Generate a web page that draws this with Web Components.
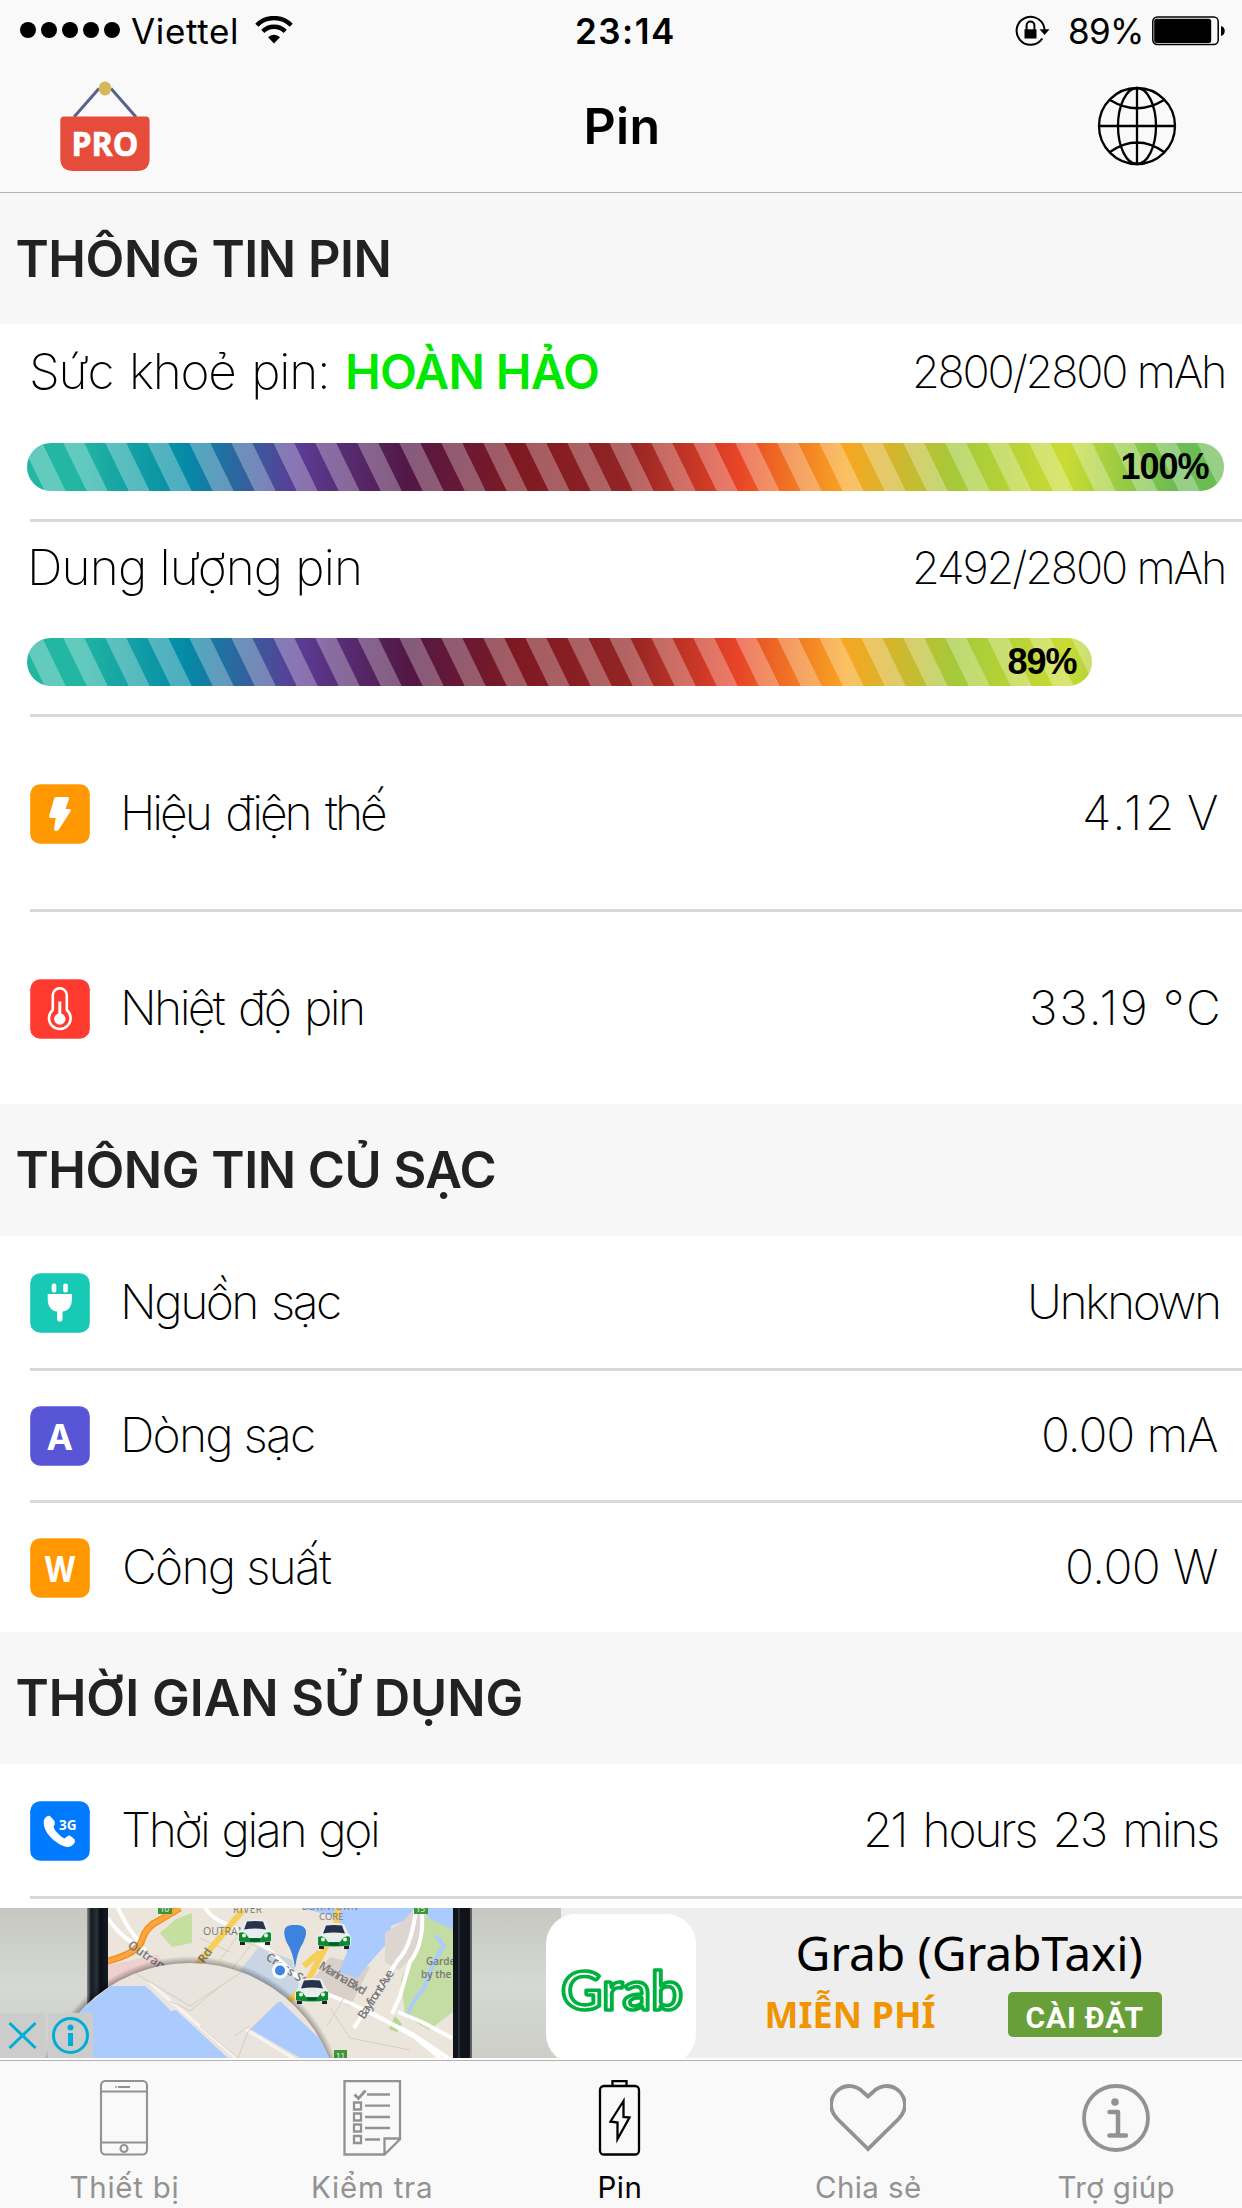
<!DOCTYPE html>
<html lang="vi">
<head>
<meta charset="utf-8">
<title>Pin</title>
<style>
html,body{margin:0;padding:0;background:#fff}
body{width:1242px;height:2208px;overflow:hidden;font-family:Inter,"Liberation Sans",sans-serif;color:#000}
</style>
</head>
<body>
<battery-app></battery-app>
<script>
const make = (name, html, init) => {
  const t = document.createElement('template');
  t.innerHTML = html;
  customElements.define(name, class extends HTMLElement {
    connectedCallback() {
      if (this.shadowRoot) return;
      this.attachShadow({mode: 'open'}).appendChild(t.content.cloneNode(true));
      if (init) init(this, this.shadowRoot);
    }
  });
};

/* Text whose tracking is set so that its ink spans the width given by "w"; "ws" widens the word spaces */
make('fit-text', `<style>:host{display:block;white-space:nowrap;flex:none}span{display:inline-block}</style><span><slot></slot></span>`, (el, root) => {
  const w = parseFloat(el.getAttribute('w')), ws = parseFloat(el.getAttribute('ws') || 0), span = root.querySelector('span');
  el.style.width = w + 'px';
  const text = el.textContent, cs = getComputedStyle(el);
  const ctx = document.createElement('canvas').getContext('2d');
  ctx.font = `${cs.fontWeight} ${cs.fontSize} ${cs.fontFamily}`;
  const m = ctx.measureText(text);
  const ink = m.actualBoundingBoxLeft + m.actualBoundingBoxRight + ws * (text.split(' ').length - 1);
  span.style.wordSpacing = ws + 'px';
  span.style.letterSpacing = (w - ink) / ([...text].length - 1) + 'px';
  span.style.marginLeft = m.actualBoundingBoxLeft + 'px';
});

make('status-bar', `<style>
:host{display:flex;height:60px;align-items:center;box-sizing:border-box;padding:1px 17px 0 20px;font-size:35px;line-height:54px}
.l,.r{flex:1;display:flex;align-items:center}
.r{justify-content:flex-end}
.dots{display:flex;gap:5px;margin:-1px 11px 0 0}
.dots i{width:16px;height:16px;border-radius:50%;background:#000}
svg{display:block;flex:none}
fit-text.t{font-weight:600;margin:0 -5px 0 0;transform:translateX(0)}
</style>
<div class="l"><div class="dots"><i></i><i></i><i></i><i></i><i></i></div><fit-text w="105">Viettel</fit-text>
<svg style="margin:-2px 0 0 19px" width="38" height="28" viewBox="0 0 38 28"><g fill="none" stroke="#000" stroke-width="4.4"><path d="M1.8 9.2a24.3 24.3 0 0 1 34.4 0"/><path d="M7.8 15.4a15.8 15.8 0 0 1 22.4 0"/></g><path d="M19 27.5l-6-6.3a8.4 8.4 0 0 1 12 0z"/></svg></div>
<fit-text class="t" w="96">23:14</fit-text>
<div class="r"><svg style="margin:-1px 20px 0 0" width="35" height="32" viewBox="0 0 35 32"><path d="M27.3 24.5A14 14 0 1 1 29.6 16" fill="none" stroke="#000" stroke-width="2"/><path d="M24.5 15.2h10L29.6 21z"/><path d="M9.5 15.3h12v9.2h-12z"/><path d="M11.6 16v-4.5a3.9 3.9 0 0 1 7.8 0V16" fill="none" stroke="#000" stroke-width="2"/></svg>
<fit-text w="71">89%</fit-text>
<svg style="margin:0 0 0 11px" width="73" height="30" viewBox="0 0 73 30"><rect x=".8" y="1" width="65.4" height="27.6" rx="4.5" fill="none" stroke="#000" stroke-width="1.5"/><rect x="2.2" y="2.8" width="57" height="24.2" rx="2.5"/><path d="M69 10c5 1 5 9 0 10z"/></svg></div>`);

make('nav-bar', `<style>
:host{display:flex;height:133px;box-sizing:border-box;border-bottom:1px solid #b2b2b2;align-items:center;padding:0 65px 0 59px;font-size:50px;font-weight:600}
svg{display:block;flex:none}.a,.b{flex:1;display:flex}.b{justify-content:flex-end}fit-text{line-height:60px;margin-right:-8px}
</style>
<div class="a"><svg width="92" height="92" viewBox="59 80 92 92"><path d="M74 117L99 88.500M136 117L111 88.500" stroke="#56628a" stroke-width="3"/><ellipse cx="105" cy="88.500" rx="6.300" ry="7" fill="#d3b85c"/><path d="M64 116.500h82q3.600 0 3.600 4v38q0 12.500-13 12.500h-63q-13.300 0-13.300-12.500v-38q0-4 3.700-4z" fill="#e64c3c"/><text x="71.500" y="156" font-family="Noto Sans, Open Sans, sans-serif" font-weight="700" font-size="34" fill="#fff" stroke="#fff" stroke-width=".6" textLength="67" lengthAdjust="spacingAndGlyphs">PRO</text></svg></div>
<fit-text w="71">Pin</fit-text>
<div class="b"><svg width="80" height="80" viewBox="-40 -40 80 80" fill="none" stroke="#000" stroke-width="2.300"><circle r="38"/><ellipse rx="19" ry="38"/><path d="M-38 0H38M0-38V38M-27-26Q0-9.500 27-26M-27 26Q0 7 27 26"/></svg></div>`);

make('section-head', `<style>:host{display:flex;height:132px;background:#f7f7f7;align-items:center;padding-left:17.500px;font-size:50.500px;line-height:60px;font-weight:600;color:#222}</style><slot></slot>`);

make('app-icon', `<style>:host{display:block;width:60px;height:60px;flex:none}svg{display:block}</style><svg width="60" height="60" viewBox="0 0 60 60"><rect x=".2" y=".2" width="59.600" height="59.600" rx="10"/><g></g></svg>`, (el, r) => {
  const letter = (s, w, x) => `<text x="${x}" y="43.500" font-family="Inter,sans-serif" font-size="36" font-weight="700" textLength="${w}" lengthAdjust="spacingAndGlyphs">${s}</text>`;
  const k = {
    volt: ['#ff9800', '<path d="M26 13h11.500q2 0 1.500 2l-3.500 10h4q2 .5 1 2.500L28.500 46q-2.500 2-4.500 0l1.700-12h-5q-2-.4-1.500-2.500l5-17q.5-1.500 1.800-1.500z"/>'],
    temp: ['#ff3b30', '<path d="M22.800 31V16.300a7 7 0 0 1 14 0V31a10.800 10.800 0 1 1-14 0z" fill="none" stroke="#fff" stroke-width="2.600"/><circle cx="29.800" cy="40" r="5.700"/><path d="M28.300 22.500h3V36h-3z"/>'],
    plug: ['#18c9b5', '<rect x="21.700" y="10.500" width="4.600" height="9" rx="2"/><rect x="33.200" y="10.500" width="4.600" height="9" rx="2"/><path d="M17.700 21h24.200v5c0 8-4 12-9.400 12.500V46a2.700 2.700 0 0 1-5.400 0v-7.500C21.700 38 17.700 34 17.700 26z"/>'],
    amp: ['#5856d6', letter('A', 26.5, 16.5)],
    watt: ['#ff9800', letter('W', 32, 14)],
    call: ['#007aff', '<path d="M20 15l4.500 5q1.200 3-.8 5.500c-.5 3 7 10.500 11 12 2-1.500 3-3 5-3.200l5 4.200q1 2.500-1 4.500c-2 2.500-5.500 3.500-9 2.500C25 42 14 32 13.700 22c0-2 .3-4 1.800-5.500q2.500-2.500 4.500-1.500z"/><text x="29" y="28.800" font-family="Open Sans,sans-serif" font-weight="700" font-size="14.500" textLength="17.500" lengthAdjust="spacingAndGlyphs">3G</text>']
  }[el.getAttribute('kind')];
  r.querySelector('rect').setAttribute('fill', k[0]);
  const g = r.querySelector('g');
  g.setAttribute('fill', '#fff');
  g.innerHTML = k[1];
});

make('info-row', `<style>
:host{display:flex;flex-direction:column;height:var(--h,129px);background:#fff}
:host([last]) hr{display:none}
.c{flex:1;display:flex;align-items:center;padding:var(--pt,0px) 24px 0 30px}
.t{flex:1;display:flex;justify-content:space-between;align-items:center;margin:0 0 var(--lift,3px) 35px;font-size:48px;line-height:60px;font-weight:170}
hr{border:0;margin:0 0 0 30px;height:3px;background:#d9d9d9;flex:none}
</style><div class="c"><slot name="icon"></slot><div class="t"><slot></slot></div></div><hr>`);

make('rainbow-bar', `<style>
:host{display:flex;width:var(--w);height:48px;border-radius:24px;overflow:hidden;position:relative;margin-left:27px;align-items:center;justify-content:flex-end;box-sizing:border-box;padding-right:14.500px;font:700 36px/50px "Liberation Sans",sans-serif}
svg{position:absolute;left:0;top:0}::slotted(*){position:relative}
</style><svg width="1198" height="48"><defs><linearGradient id="g" gradientUnits="userSpaceOnUse" x1="0" x2="1198"></linearGradient>
<pattern id="p" width="42" height="48" patternUnits="userSpaceOnUse" patternTransform="translate(36.300 0) skewX(26)"><rect width="21" height="48" fill="#fff" fill-opacity=".29"/></pattern></defs><rect width="1198" height="48" fill="url(#g)"/><rect width="1198" height="48" fill="url(#p)"/></svg><slot></slot>`, (el, r) => {
  const c = ['#22b6a3', '#048aa7', '#5b3c96', '#521846', '#7e1922', '#922424', '#e74327', '#f9a622', '#a3ca3a', '#cadb33', '#6bbc53'];
  r.getElementById('g').innerHTML = c.map((v, i) => `<stop offset="${(50 + i * 109.8) / 1198}" stop-color="${v}"/>`).join('');
});

make('gauge-row', `<style>
:host{display:flex;flex-direction:column;height:var(--h,195px);background:#fff}
.top{display:flex;height:var(--top,92px);padding:0 18px 0 32px;justify-content:space-between;align-items:center;box-sizing:border-box;line-height:60px}
.k{display:flex;align-items:baseline;font-size:49.500px;font-weight:170;gap:22px}
.v{font-size:45px;font-weight:170;padding-top:var(--vt,2px)}
.g{flex:1;padding-top:var(--gt,29px)}
hr{border:0;margin:0 0 0 30px;height:3px;background:#d9d9d9;flex:none}
::slotted([slot=state]){font-size:48px;font-weight:600;color:#00e800}
</style><div class="top"><div class="k"><slot name="label"></slot><slot name="state"></slot></div><div class="v"><slot name="value"></slot></div></div><div class="g"><slot></slot></div><hr>`);

const car = (x, y) => `<g transform="translate(${x} ${y})"><path d="M2 20h5v6H2zM27 20h5v6h-5z" fill="#222"/><path d="M7 1q10-2 20 0l4 9q3 2 3 5v7q-17 4-34 0v-7q0-3 3-5z" fill="#e8eeee"/><path d="M1 14q4-2 7 1l3 4h12l3-4q4-3 7-1v8q-16 3-32 0z" fill="#0c8a35"/><path d="M9 2.500q8-1 16 0l3 8q-11-2-22 0z" fill="#29324a"/><circle cx="6" cy="16.500" r="2" fill="#f4ffd8"/><circle cx="28" cy="16.500" r="2" fill="#f4ffd8"/><path d="M12 19.500h10v3H12z" fill="#075a24"/></g>`;

make('ad-photo', `<style>:host{display:block;width:561px;height:150px;overflow:hidden;flex:none}svg{display:block}text{font-family:"Open Sans",sans-serif;fill:#777}</style>
<svg width="561" height="150" viewBox="0 0 561 150"><defs>
<linearGradient id="w" x1="0" x2="0" y1="0" y2="1"><stop offset="0" stop-color="#c5c7c0"/><stop offset=".5" stop-color="#d6d8d3"/><stop offset="1" stop-color="#cccec7"/></linearGradient>
<linearGradient id="f"><stop offset="0" stop-color="#8a8c8b"/><stop offset=".18" stop-color="#161b20"/><stop offset=".45" stop-color="#26323a"/><stop offset=".6" stop-color="#0b0f15"/><stop offset="1" stop-color="#161d26"/></linearGradient>
<radialGradient id="s"><stop offset=".93" stop-color="#000" stop-opacity=".5"/><stop offset="1" stop-color="#000" stop-opacity="0"/></radialGradient>
<clipPath id="m"><path d="M108 0h345v150H108z"/></clipPath><clipPath id="l"><circle cx="190" cy="204" r="149"/></clipPath></defs>
<rect width="561" height="150" fill="url(#w)"/><rect x="87" width="22" height="150" fill="url(#f)"/>
<g clip-path="url(#m)"><path fill="#ebe5dc" d="M108 0h345v150H108z"/>
<path d="M108 57l50-10 10 15-60 30z" fill="#edd0cf"/><path d="M160 25l16-14 16-6v30l-20 4z" fill="#c5dfa0"/>
<path d="M240 62l18-22 34 12 8 30-10 10z" fill="#c7d5e4"/><path d="M310 75l20-26 40 10-20 40z" fill="#d8d0c9"/>
<path d="M299 0h117l-5 10-20 8-1 14-25 28-8 10-18-6 8-20-5-16-8-20-34-8z" fill="#abcbff"/>
<path d="M385 25l18-12 12-13h16l-10 40-22 22-14-8z" fill="#ddd5cf"/>
<path d="M421 0h32v22l-18-4z" fill="#abcbff"/><path d="M424 8l29 14v78l-28 22-40-18 16-32 14-30z" fill="#c4dda2"/><path d="M380 100l21-30 24 48 28-20v52h-80z" fill="#ebe5dc"/><path d="M401 72l22-32 30 4v60l-24 18-24-14z" fill="#c4dda2"/><path d="M436 28l8 10-10 16-10 26q-20 24-14 30" fill="none" stroke="#abcbff" stroke-width="4"/><path d="M395 108l7 8-5 8-8-3z" fill="#b5d78e"/>
<g fill="none" stroke="#fff" stroke-width="4"><path d="M108 10q12 20 38 32M118 0q10 22 22 34M205 0q8 12 26 18l36 22 40 38 45 18 60 30 48 32M416 0q-4 38-18 52l-44 68M422 6q2 30-12 48l-10 34-8 18M398 104l24 10 30 16M370 104l45 25 25 21"/></g>
<g stroke="#d7d0c7" stroke-width="1" fill="none"><path d="M220 52l16-22 54 22M230 64l20-26M200 30l30 14M330 100l20 30 60 12M345 88l-18 30"/></g>
<path d="M104 54q34-8 38-22t18-20L180 0" fill="none" stroke="#ef8e22" stroke-width="7"/><path d="M104 54q34-8 38-22t18-20L180 0" fill="none" stroke="#ffa53c" stroke-width="4.500"/>
<path d="M196 58L243 2M338 0l-2 20-30 56-22 22M320 44l-16 14" fill="none" stroke="#f7ce58" stroke-width="6"/>
<path d="M158 0h14v6h-14zM414 0h14v6h-14z" fill="#3c9634"/><text x="160" y="4" font-size="8" style="fill:#fff">10</text><text x="416" y="4" font-size="8" style="fill:#fff">15</text>
<text x="233" y="5" font-size="10" textLength="29">RIVER</text><text x="203" y="27" font-size="10.500">OUTRAM</text><text x="302" y="2" font-size="9">DOWNTOWN</text><text x="319" y="12" font-size="9.500">CORE</text>
<g font-size="12" style="font-weight:600"><text transform="translate(127 39) rotate(34)">Outram Rd</text><text transform="translate(204 56) rotate(-55)">Rd</text><text transform="translate(265 51) rotate(34)">Cross St</text><text transform="translate(318 60) rotate(31)" textLength="53">Marina Blvd</text><text transform="translate(364 112) rotate(-57)" textLength="56">Bayfront Ave</text><text x="426" y="57" font-size="10">Gardens</text><text x="421" y="70" font-size="10">by the Bay</text></g>
<path d="M334 142h13v8h-13z" fill="#3c9634"/><text x="336" y="150" font-size="8" style="fill:#fff">11</text>
${car(238, 11)}${car(317, 15)}${car(295, 70)}
<path d="M295 60q-2-16-8-25c-8-19 4-18 8-18s17 0 8 18q-6 9-8 25z" fill="#3c82df"/><circle cx="280" cy="62.500" r="8" fill="#fff"/><circle cx="280" cy="62.500" r="5" fill="#3d82e6"/></g>
<circle cx="190" cy="204" r="156" fill="url(#s)"/><g clip-path="url(#l)"><path fill="#e9e4dd" d="M30 50h320v100H30z"/><path d="M60 120l50-42h35l6 5 20 20 5-1 54 50-170 10z" fill="#abcbff"/><path d="M280 93l60 57h-40l-50-29z" fill="#abcbff"/><g fill="none" stroke="#f7f4f0" stroke-width="3"><path d="M150 75l86 75M245 121l48 29"/></g><g fill="none" stroke="#d2ccc4"><path d="M130 62l60 36 55-36M170 93l20 10 32-26M200 118l38 32 10-26 30-30M235 128l14-10"/></g></g>
<rect x="453" width="19" height="150" fill="#10141a"/><path d="M459 0v150" stroke="#27313b" stroke-width="2"/><path d="M471 0v150" stroke="#777b7b" stroke-width="1.500"/>
<path d="M0 105h45v45H0zM48 105h45v45H48z" fill="#ccc"/><g fill="none" stroke="#00aed4" stroke-width="3"><path d="M9.500 115l26 25M35.500 115l-26 25"/><circle cx="70.500" cy="127.500" r="17"/></g><circle cx="70.500" cy="119.500" r="3" fill="#00aed4"/><path d="M68 125h5v13h-5z" fill="#00aed4"/></svg>`);

make('ad-banner', `<style>
:host{display:flex;height:150px;overflow:hidden;background:#eee;margin-top:9px}
.logo{width:150px;height:150px;flex:none;border-radius:30px;background:#fff;margin:6px 0 0 -15px;position:relative}
.logo svg{display:block}
.txt{flex:1;font-family:"Noto Sans","Open Sans",sans-serif}
.title{font-size:48px;line-height:60px;margin:15px 0 0 101.500px}
.line{display:flex;align-items:center;margin:9px 0 0 71.500px;height:45px}
.free{font-size:36px;line-height:45px;font-weight:700;color:#f09400}
.btn{width:154px;height:45px;border-radius:5px;background:#689f38;color:#fff;margin-left:72px;display:flex;justify-content:center;font:700 30px/45px Roboto,sans-serif}
.btn fit-text{margin-top:3px}
</style><ad-photo></ad-photo><div class="logo"><svg width="150" height="150" viewBox="0 0 150 150"><text x="15" y="95.500" font-family="Lato,sans-serif" font-weight="600" font-size="53" fill="#fff" stroke="#00b140" stroke-width="3.600" stroke-linejoin="round" textLength="122" lengthAdjust="spacingAndGlyphs">Grab</text></svg></div>
<div class="txt"><fit-text class="title" w="344">Grab (GrabTaxi)</fit-text><div class="line"><fit-text class="free" w="168">MIỄN PHÍ</fit-text><div class="btn"><fit-text w="116">CÀI ĐẶT</fit-text></div></div></div>`);

make('tab-item', `<style>
:host{flex:1;display:flex;flex-direction:column;align-items:center;color:#929292;font-size:29.500px;line-height:36px;padding-top:19px}
:host([active]){color:#000}
svg{display:block;margin-bottom:13px}
</style><svg width="76" height="76" viewBox="0 0 76 76" fill="none" stroke="currentColor"></svg><slot></slot>`, (el, r) => {
  r.querySelector('svg').innerHTML = {
    phone: '<g stroke-width="2.100"><rect x="15" y="1" width="46" height="73.500" rx="4.500"/><path d="M15 11.500h46M15 62.500h46M32 7h12"/><circle cx="38" cy="68.500" r="3.500"/></g><circle cx="30" cy="7" r="1" fill="currentColor" stroke="none"/>',
    list: '<g stroke-width="2.300"><path d="M10.500 1.200h55.500v58L50.500 74.500h-40zM50.500 74.500v-16H66"/><path d="M33 14.500h23M31 25.700h25M31 37h25M31 48h25M31 59.500h15"/><path d="M20.500 14.500l4 4 7-8" stroke-width="2.800"/><path d="M20 22.500h7v7h-7zM20 33.500h7v7h-7zM20 44.500h7v7h-7zM20 56h7v7h-7z"/></g>',
    battery: '<g stroke-width="2.300"><rect x="18" y="6" width="39" height="68.500" rx="4"/><path d="M30.500 6V1h14v5M41.500 21L28.500 41.500l7 1V59l12-21.500-6-.5z"/></g>',
    heart: '<path d="M38 69L7 38.500C-6 24 5 6 19 6q8 0 14 6l5 4.500 5-4.500q6-6 14-6c14 0 25 18 12 32.500z" stroke-width="3.800"/>',
    info: '<circle cx="38" cy="38" r="32" stroke-width="3.800"/><circle cx="37" cy="22" r="3.800" fill="currentColor" stroke="none"/><path d="M31.500 32h8.500v23.500M31.500 55.500H48" stroke-width="4.500" stroke-linecap="round" stroke-linejoin="round"/>'
  }[el.getAttribute('icon')];
});

make('tab-bar', `<style>:host{display:flex;height:148px;box-sizing:border-box;margin-top:2px;border-top:1px solid #b2b2b2;background:#f9f9f9;padding-right:2px}</style>
<tab-item icon="phone"><fit-text w="107">Thiết bị</fit-text></tab-item>
<tab-item icon="list"><fit-text w="118">Kiểm tra</fit-text></tab-item>
<tab-item icon="battery" active><fit-text w="41">Pin</fit-text></tab-item>
<tab-item icon="heart"><fit-text w="104">Chia sẻ</fit-text></tab-item>
<tab-item icon="info"><fit-text w="115">Trợ giúp</fit-text></tab-item>`);

make('battery-app', `<style>:host{display:block;width:1242px;height:2208px;background:#fff}.top{background:#f9f9f9;height:193px}.first{margin-top:-1px;height:132px;box-sizing:border-box;border-top:1px solid #b2b2b2}</style>
<div class="top"><status-bar></status-bar><nav-bar></nav-bar></div>
<section-head class="first"><fit-text w="371">THÔNG TIN PIN</fit-text></section-head>
<gauge-row style="--h:198px;--top:94px;--gt:25px"><fit-text slot="label" w="294" ws="3">Sức khoẻ pin:</fit-text><fit-text slot="state" w="250">HOÀN HẢO</fit-text><fit-text slot="value" w="309">2800/2800 mAh</fit-text><rainbow-bar style="--w:1197px"><fit-text w="87">100%</fit-text></rainbow-bar></gauge-row>
<gauge-row style="--top:89px;--gt:27px;--vt:2px"><fit-text slot="label" w="327">Dung lượng pin</fit-text><fit-text slot="value" w="309">2492/2800 mAh</fit-text><rainbow-bar style="--w:1065px"><fit-text w="69">89%</fit-text></rainbow-bar></gauge-row>
<info-row style="--h:195px;--pt:2px"><app-icon slot="icon" kind="volt"></app-icon><fit-text w="260" ws="5">Hiệu điện thế</fit-text><fit-text w="133" ws="-6">4.12 V</fit-text></info-row>
<info-row last style="--h:192px;--pt:2px"><app-icon slot="icon" kind="temp"></app-icon><fit-text w="237" ws="4">Nhiệt độ pin</fit-text><fit-text w="186" ws="-2">33.19 °C</fit-text></info-row>
<section-head><fit-text w="477">THÔNG TIN CỦ SẠC</fit-text></section-head>
<info-row style="--h:135px;--pt:1px;--lift:2px"><app-icon slot="icon" kind="plug"></app-icon><fit-text w="215" ws="3">Nguồn sạc</fit-text><fit-text w="187">Unknown</fit-text></info-row>
<info-row style="--h:132px;--lift:2px"><app-icon slot="icon" kind="amp"></app-icon><fit-text w="189">Dòng sạc</fit-text><fit-text w="174">0.00 mA</fit-text></info-row>
<info-row last style="--lift:2px"><app-icon slot="icon" kind="watt"></app-icon><fit-text w="206">Công suất</fit-text><fit-text w="150">0.00 W</fit-text></info-row>
<section-head><fit-text w="504">THỜI GIAN SỬ DỤNG</fit-text></section-head>
<info-row style="--h:135px;--pt:1px;--lift:2px"><app-icon slot="icon" kind="call"></app-icon><fit-text w="255" ws="2" style="margin-left:-2px">Thời gian gọi</fit-text><fit-text w="351" ws="5">21 hours 23 mins</fit-text></info-row>
<ad-banner></ad-banner><tab-bar></tab-bar>`);
</script>
</body>
</html>
